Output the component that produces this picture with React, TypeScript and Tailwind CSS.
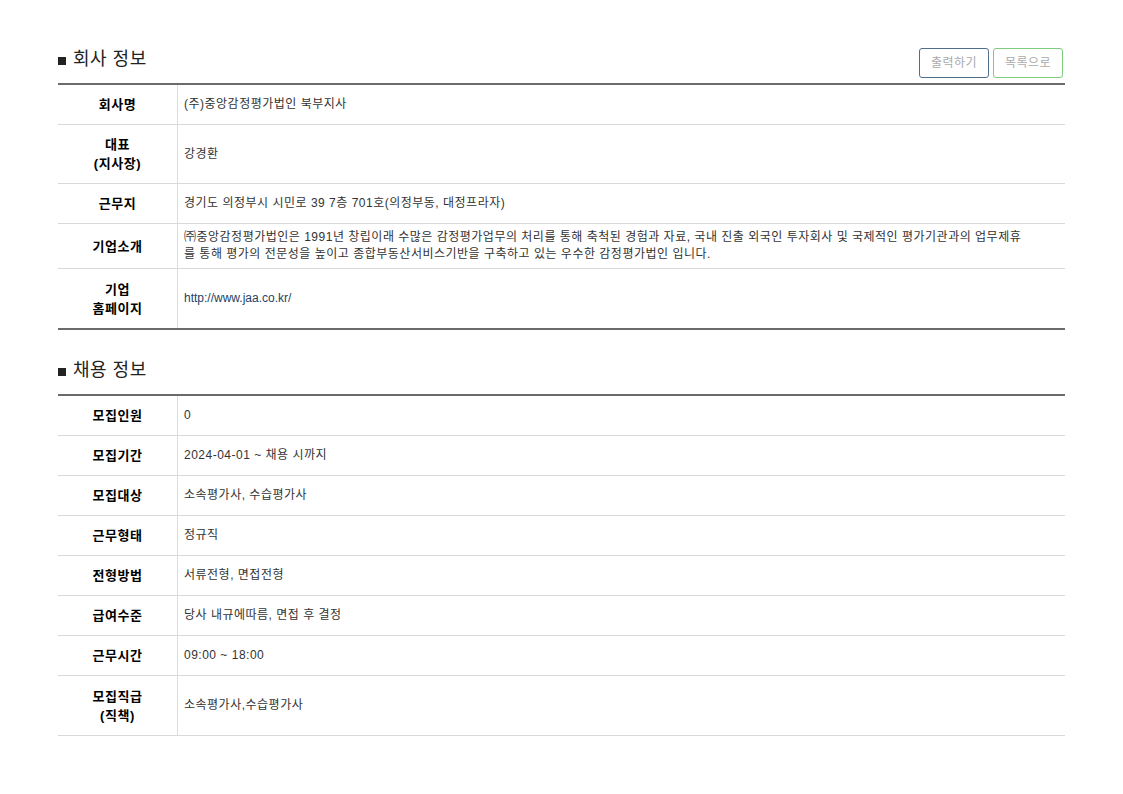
import React from "react"

type Row = { label: React.ReactNode; value: React.ReactNode; h: string }

const font = { fontFamily: '"Liberation Sans", "Noto Sans CJK KR", sans-serif' }

const companyRows: Row[] = [
  { label: "회사명", value: "(주)중앙감정평가법인 북부지사", h: "h-[40px]" },
  { label: <>대표<br />(지사장)</>, value: "강경환", h: "h-[59px]" },
  { label: "근무지", value: "경기도 의정부시 시민로 39 7층 701호(의정부동, 대정프라자)", h: "h-[40px]" },
  {
    label: "기업소개",
    value: "㈜중앙감정평가법인은 1991년 창립이래 수많은 감정평가업무의 처리를 통해 축척된 경험과 자료, 국내 진출 외국인 투자회사 및 국제적인 평가기관과의 업무제휴를 통해 평가의 전문성을 높이고 종합부동산서비스기반을 구축하고 있는 우수한 감정평가법인 입니다.",
    h: "h-[45px]",
  },
  {
    label: <>기업<br />홈페이지</>,
    value: <span className="text-[#1d3f66] tracking-normal">http://www.jaa.co.kr/</span>,
    h: "h-[59px]",
  },
]

const recruitRows: Row[] = [
  { label: "모집인원", value: "0", h: "h-[40px]" },
  { label: "모집기간", value: "2024-04-01 ~ 채용 시까지", h: "h-[40px]" },
  { label: "모집대상", value: "소속평가사, 수습평가사", h: "h-[40px]" },
  { label: "근무형태", value: "정규직", h: "h-[40px]" },
  { label: "전형방법", value: "서류전형, 면접전형", h: "h-[40px]" },
  { label: "급여수준", value: "당사 내규에따름, 면접 후 결정", h: "h-[40px]" },
  { label: "근무시간", value: "09:00 ~ 18:00", h: "h-[40px]" },
  { label: <>모집직급<br />(직책)</>, value: "소속평가사,수습평가사", h: "h-[60px]" },
]

function InfoTable({ rows, thickBottom }: { rows: Row[]; thickBottom?: boolean }) {
  return (
    <div className={`border-t-2 border-[#6b6b6b] ${thickBottom ? "border-b-2 border-b-[#6b6b6b]" : ""}`}>
      {rows.map((row, i) => (
        <div
          key={i}
          className={`flex ${row.h} ${i < rows.length - 1 || !thickBottom ? "border-b border-[#d9d9d9]" : ""}`}
        >
          <div className="w-[120px] shrink-0 flex items-center justify-center text-center text-[13px] font-bold leading-[19px] tracking-[0.6px] text-black border-r border-[#dcdcdc]">
            <span>{row.label}</span>
          </div>
          <div className="flex-1 flex items-center pl-[6px] pr-[34px] text-[12px] leading-[17px] tracking-[0.5px] text-[#333] break-all">
            <span>{row.value}</span>
          </div>
        </div>
      ))}
    </div>
  )
}

function Title({ children }: { children: React.ReactNode }) {
  return (
    <h2 className="flex items-center text-[18px] leading-[24px] tracking-[0.5px] text-[#222]">
      <span className="inline-block w-[8px] h-[8px] bg-[#222] mr-[7px] mt-[3px]" />
      {children}
    </h2>
  )
}

export default function App() {
  return (
    <div className="w-[1123px] min-h-[794px] bg-white px-[58px] pt-[47px]" style={font}>
      {/* 회사 정보 */}
      <div className="flex items-start justify-between h-[31px] mb-[5px] pr-[2px]">
        <Title>회사 정보</Title>
        <div className="flex gap-[4px] mt-[1px]">
          <button className="w-[70px] h-[30px] rounded-[3px] border border-[#4f6f8f] text-[12px] tracking-[0.5px] text-[#aaa]">
            출력하기
          </button>
          <button className="w-[70px] h-[30px] rounded-[3px] border border-[#7fcc7f] text-[12px] tracking-[0.5px] text-[#aaa]">
            목록으로
          </button>
        </div>
      </div>
      <InfoTable rows={companyRows} thickBottom />

      {/* 채용 정보 */}
      <div className="mt-[28px] mb-[12px]">
        <Title>채용 정보</Title>
      </div>
      <InfoTable rows={recruitRows} />
    </div>
  )
}
